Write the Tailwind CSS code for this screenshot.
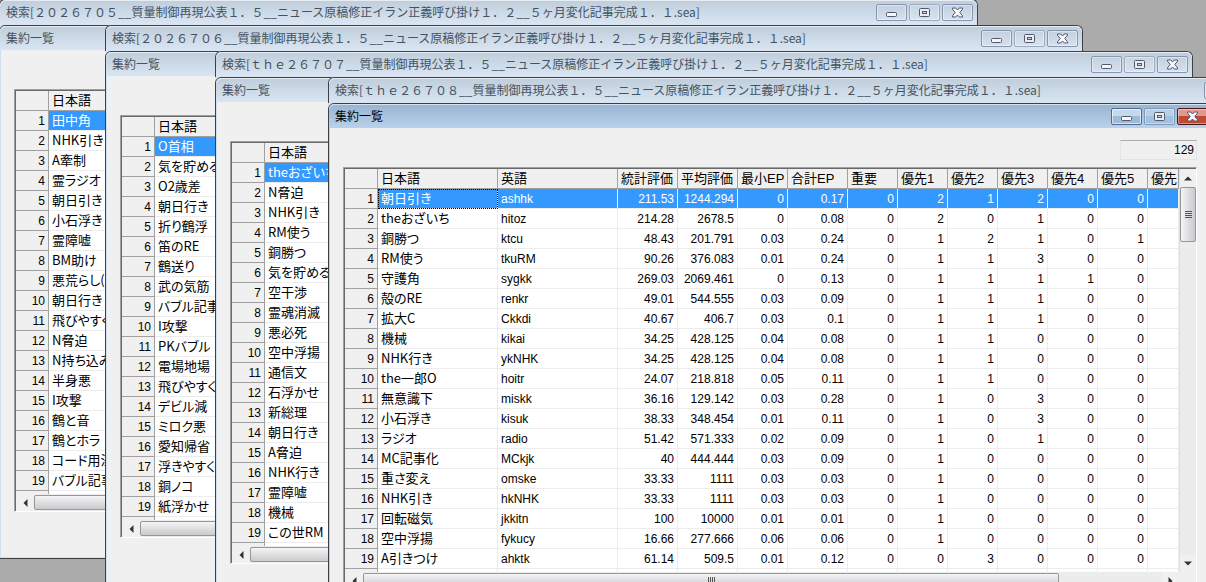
<!DOCTYPE html>
<html lang="ja">
<head>
  <meta charset="UTF-8">
  <meta name="viewport" content="width=device-width, initial-scale=1">
  <title>集約一覧</title>
  <script src="https://cdn.jsdelivr.net/npm/@tailwindcss/browser@4"></script>
</head>
<body class="relative h-screen overflow-hidden bg-[#ababab] text-black font-['Liberation_Sans','Noto_Sans_CJK_JP',sans-serif]">

  <!-- Caption glyphs -->
  <svg class="hidden">
    <symbol id="min" viewBox="0 0 13 11">
      <rect x="1.5" y="5.5" width="10" height="4" rx="1" fill="#f4f6f8" stroke="#53586a"/>
    </symbol>
    <symbol id="max" viewBox="0 0 13 11">
      <rect x="1.5" y="1.5" width="10" height="8" rx="1" fill="#e9edf2" stroke="#53586a"/>
      <rect x="4.5" y="4.5" width="4" height="2" fill="#c9d4e0" stroke="#53586a"/>
    </symbol>
    <symbol id="close" viewBox="0 0 13 11">
      <path d="M1.5 1h3.2l1.8 2 1.8-2h3.2v1.2L8.8 5.5l2.7 3.3V10H8.300L6.500 8l-1.800 2H1.500V8.800L4.200 5.500 1.500 2.200z" fill="#f6f7f9" stroke="#53586a" stroke-linejoin="round"/>
    </symbol>
    <symbol id="left" viewBox="0 0 5 8"><path d="M4.500 0v8L.5 4z" fill="#333"/></symbol>
    <symbol id="right" viewBox="0 0 5 8"><path d="M.5 0v8l4-4z" fill="#333"/></symbol>
    <symbol id="up" viewBox="0 0 8 5"><path d="M0 4.500h8L4 .5z" fill="#333"/></symbol>
    <symbol id="down" viewBox="0 0 8 5"><path d="M0 .5h8l-4 4z" fill="#333"/></symbol>
  </svg>

  <main id="desktop"></main>

  <script>
    const TAIL = "__質量制御再現公表１．５__ニュース原稿修正イラン正義呼び掛け１．２__５ヶ月変化記事完成１．１.sea]";

    const windows = [
      { pos: "-left-px -top-px w-[979px]", title: "検索[２０２６７０５" + TAIL,
        rows: ["田中角", "NHK引き", "A牽制", "霊ラジオ", "朝日引き", "小石浮き", "霊障嘘", "BM助け", "悪荒らし(", "朝日行き", "飛びやすく", "N脅迫", "N持ち込み", "半身悪", "I攻撃", "鶴と音", "鶴とホラ", "コード用法", "バブル記事"] },
      { pos: "left-[105px] top-[25px] w-[978px]", title: "検索[２０２６７０６" + TAIL,
        rows: ["O首相", "気を貯める", "O2歳差", "朝日行き", "折り鶴浮", "笛のRE", "鶴送り", "武の気筋", "バブル記事", "I攻撃", "PKバブル", "電場地場", "飛びやすく", "デビル減", "ミロク悪", "愛知帰省", "浮きやすく", "銅ノコ", "紙浮かせ"] },
      { pos: "left-[215px] top-[51px] w-[978px]", title: "検索[ｔｈｅ２６７０７" + TAIL,
        rows: ["theおざいち", "N脅迫", "NHK引き", "RM使う", "銅勝つ", "気を貯める", "空干渉", "霊魂消滅", "悪必死", "空中浮揚", "通信文", "石浮かせ", "新総理", "朝日行き", "A脅迫", "NHK行き", "霊障嘘", "機械", "この世RM"] },
      { pos: "left-[328px] top-[77px] w-[978px]", title: "検索[ｔｈｅ２６７０８" + TAIL, active: true,
        rows: [
          "朝日引き|ashhk|211.53|1244.294|0|0.17|0|2|1|2|0|0",
          "theおざいち|hitoz|214.28|2678.5|0|0.08|0|2|0|1|0|0",
          "銅勝つ|ktcu|48.43|201.791|0.03|0.24|0|1|2|1|0|1",
          "RM使う|tkuRM|90.26|376.083|0.01|0.24|0|1|1|3|0|0",
          "守護角|sygkk|269.03|2069.461|0|0.13|0|1|1|1|1|0",
          "殻のRE|renkr|49.01|544.555|0.03|0.09|0|1|1|1|0|0",
          "拡大C|Ckkdi|40.67|406.7|0.03|0.1|0|1|1|1|0|0",
          "機械|kikai|34.25|428.125|0.04|0.08|0|1|1|0|0|0",
          "NHK行き|ykNHK|34.25|428.125|0.04|0.08|0|1|1|0|0|0",
          "the一郎O|hoitr|24.07|218.818|0.05|0.11|0|1|1|0|0|0",
          "無意識下|miskk|36.16|129.142|0.03|0.28|0|1|0|3|0|0",
          "小石浮き|kisuk|38.33|348.454|0.01|0.11|0|1|0|3|0|0",
          "ラジオ|radio|51.42|571.333|0.02|0.09|0|1|0|1|0|0",
          "MC記事化|MCkjk|40|444.444|0.03|0.09|0|1|0|0|0|0",
          "重さ変え|omske|33.33|1111|0.03|0.03|0|1|0|0|0|0",
          "NHK引き|hkNHK|33.33|1111|0.03|0.03|0|1|0|0|0|0",
          "回転磁気|jkkitn|100|10000|0.01|0.01|0|1|0|0|0|0",
          "空中浮揚|fykucy|16.66|277.666|0.06|0.06|0|1|0|0|0|0",
          "A引きつけ|ahktk|61.14|509.5|0.01|0.12|0|0|3|0|0|0"
        ] }
    ];

    const columns = ["日本語", "英語", "統計評価", "平均評価", "最小EP", "合計EP", "重要", "優先1", "優先2", "優先3", "優先4", "優先5", "優先"];
    const widths = [120, 120, 60, 60, 50, 60, 50, 50, 50, 50, 50, 50, 31];

    const icon = (id, cls) => `<svg class="${cls}"><use href="#${id}"/></svg>`;

    // minimise / maximise / close
    function captionButtons(active) {
      const base = "flex h-[17px] w-[31px] items-center justify-center rounded-xs border";
      const min = active ? "border-[#53698c] bg-linear-to-b from-[#c6d8ec] from-50% to-[#9dbbdb] to-50% inset-ring inset-ring-white/60"
                         : "border-[#8796ae] bg-linear-to-b from-[#c3d0df] to-[#d5e1ee] inset-ring inset-ring-white/40";
      const max = active ? "border-[#7f9abb] bg-linear-to-b from-[#b9cfe7] from-50% to-[#a4c0df] to-50% inset-ring inset-ring-white/40"
                         : "border-[#9caabf] bg-linear-to-b from-[#c6d3e1] to-[#d8e4f0] inset-ring inset-ring-white/40";
      const close = active ? "border-[#4a1519] bg-linear-to-b from-[#e0998d] from-50% to-[#bf4a31] to-50% inset-ring inset-ring-white/40" : min;
      return `<div class="flex gap-0.5">
        <button aria-label="最小化" class="${base} ${min}">${icon("min", "h-[11px] w-[13px]")}</button>
        <button aria-label="最大化" class="${base} ${max}">${icon("max", "h-[11px] w-[13px]")}</button>
        <button aria-label="閉じる" class="${base} ${close}">${icon("close", "h-[11px] w-[13px]")}</button>
      </div>`;
    }

    function titleBar(tag, text, buttons, active) {
      const skin = active ? "from-[#98b3d2] to-[#b9d1ea] text-black" : "from-[#bfcddb] to-[#d9e5f2] text-[#45525f]";
      return `<header class="flex h-6 items-center justify-between rounded-t-md bg-linear-to-b pl-1.5 pr-1 inset-shadow-[0_1px_0_#ffffffa0] ${skin}">
        <${tag} class="whitespace-nowrap text-[12px] leading-6 font-['Noto_Sans_CJK_JP',sans-serif]">${text}</${tag}>${buttons}
      </header>`;
    }

    function grid(w) {
      const cols = w.active ? columns : columns.slice(0, 1);
      const ja = "pb-0.5 text-left text-[13px] leading-[17px] font-['Noto_Sans_CJK_JP',sans-serif] [font-feature-settings:'palt']";
      const head = cols.map(c => `<th scope="col" class="h-5 overflow-hidden border-r border-b border-[#a0a0a0] bg-[#f0f0f0] p-0 pl-[3px] text-left text-[13px] font-normal">${c}</th>`).join("");
      const body = [...w.rows, ""].map((line, r) => {
        const cells = line.split("|");
        const tds = cols.map((c, i) => {
          const kind = i === 0 ? ja : i === 1 ? "pt-px text-left leading-[18px]" : "pt-px text-right leading-[18px]";
          const fill = r === 0 ? "bg-[#3399ff] text-white" : "bg-white";
          const focus = r === 0 && i === 0 && w.active ? "outline outline-dotted outline-black -outline-offset-1" : "";
          return `<td class="h-5 overflow-hidden border-r border-b border-[#ececec] px-[3px] ${kind} ${fill} ${focus}">${cells[i] ?? ""}</td>`;
        }).join("");
        return `<tr><th scope="row" class="h-5 border-r border-b border-[#a0a0a0] bg-[#f0f0f0] pt-px pr-[3px] text-right font-normal leading-[18px]">${r < 19 ? r + 1 : ""}</th>${tds}</tr>`;
      }).join("");
      const total = 33 + cols.reduce((s, c, i) => s + widths[i], 0);
      return `<div class="h-[403px] min-w-0 flex-1 overflow-hidden bg-white">
        <table class="table-fixed border-separate border-spacing-0 whitespace-nowrap text-[12px] leading-[19px]" style="width:${total}px">
          <colgroup><col style="width:33px">${cols.map((c, i) => `<col style="width:${widths[i]}px">`).join("")}</colgroup>
          <thead><tr><th class="h-5 border-r border-b border-[#a0a0a0] bg-[#f0f0f0] p-0"></th>${head}</tr></thead>
          <tbody>${body}</tbody>
        </table>
      </div>`;
    }

    const vScroll = `<div class="flex w-[17px] flex-col border-l border-[#e0e0e0] bg-[#ececec]">
        <button aria-label="上へ" class="flex h-[18px] items-center justify-center bg-[#f0f0f0]">${icon("up", "h-[5px] w-2")}</button>
        <div class="flex h-[55px] flex-col items-center justify-center gap-px rounded-xs border border-[#979797] bg-linear-to-r from-[#f5f5f5] to-[#c9cacd]">
          <i class="h-px w-[7px] bg-[#555]"></i><i class="h-px w-[7px] bg-[#555]"></i><i class="h-px w-[7px] bg-[#555]"></i><i class="h-px w-[7px] bg-[#555]"></i>
        </div>
        <button aria-label="下へ" class="mt-auto flex h-[17px] items-center justify-center bg-[#f0f0f0]">${icon("down", "h-[5px] w-2")}</button>
      </div>`;

    function hScroll(active) {
      return `<div class="flex h-[17px] bg-[#ececec] ${active ? "mr-[17px]" : ""}">
        <button aria-label="左へ" class="flex w-[18px] items-center justify-center bg-[#f0f0f0]">${icon("left", "h-2 w-[5px]")}</button>
        <div class="my-px flex w-[696px] items-center justify-center gap-px rounded-xs border border-[#979797] bg-linear-to-b from-[#f5f5f5] to-[#c9cacd]">
          <i class="h-[7px] w-px bg-[#555]"></i><i class="h-[7px] w-px bg-[#555]"></i><i class="h-[7px] w-px bg-[#555]"></i><i class="h-[7px] w-px bg-[#555]"></i>
        </div>
        <button aria-label="右へ" class="ml-auto flex w-[17px] items-center justify-center bg-[#f0f0f0]">${icon("right", "h-2 w-[5px]")}</button>
      </div>`;
    }

    document.getElementById("desktop").innerHTML = windows.map(w => `
      <section class="absolute ${w.pos} rounded-t-md bg-[#d7e4f2]">
        <div class="rounded-t-md border border-b-0 border-[#3c4148] pb-px">${titleBar("h1", w.title, captionButtons(false), false)}</div>
        <section class="${w.active ? "w-[885px]" : "w-full"} rounded-t-md border border-[#3c4148]">
          ${titleBar("h2", "集約一覧", captionButtons(w.active), w.active)}
          <div class="border-x border-b bg-[#f0f0f0] pl-[13px] pr-3.5 pb-[45px] ${w.active ? "border-[#b9d1ea]" : "border-[#cfe0f0]"}">
            <div class="flex h-[39px] items-center justify-end pt-1">
              ${w.active ? `<input aria-label="件数" readonly value="129" class="h-5 w-[77px] border border-[#e3e3ea] border-t-[#abadb3] bg-[#f0f0f0] px-0.5 text-right text-[12px]">` : ""}
            </div>
            <div class="border border-t-[#a0a0a0] border-l-[#a0a0a0] border-r-white border-b-white">
              <div class="border-t border-l border-[#696969]">
                <div class="flex">${grid(w)}${w.active ? vScroll : ""}</div>
                ${hScroll(w.active)}
              </div>
            </div>
          </div>
        </section>
      </section>`).join("");
  </script>
</body>
</html>
